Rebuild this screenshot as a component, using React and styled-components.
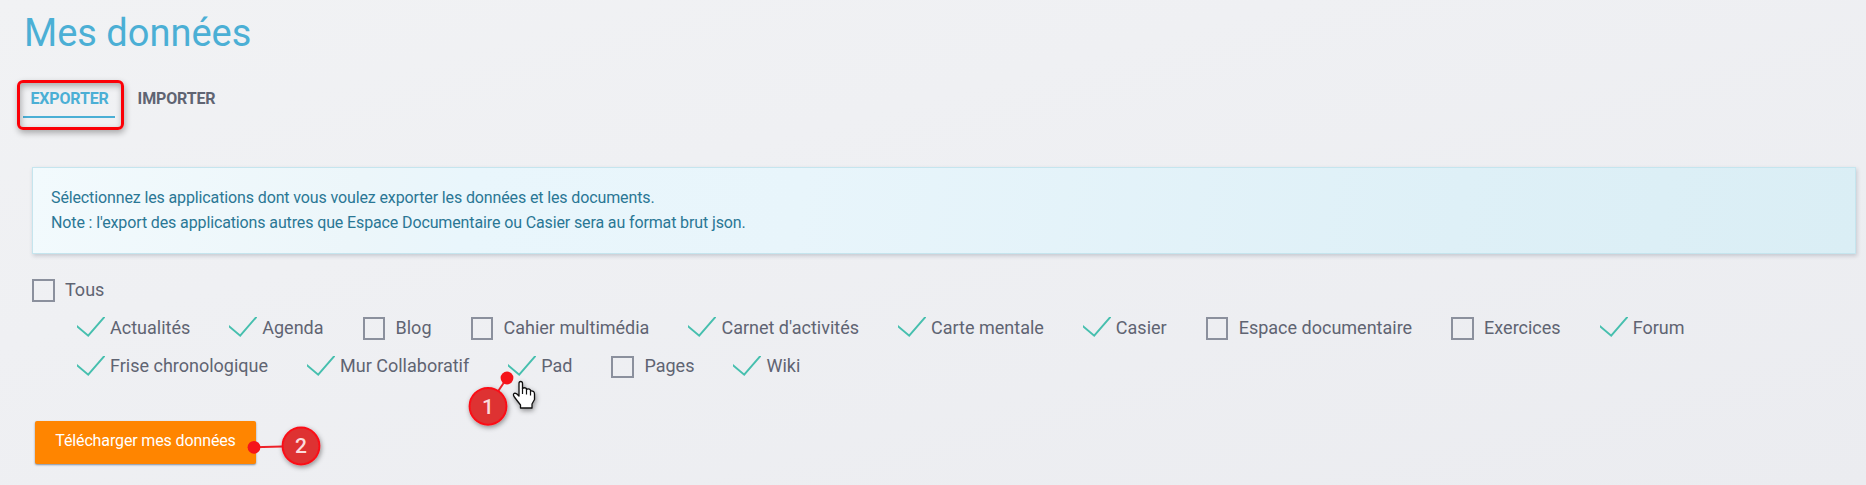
import React from "react";
import styled, { createGlobalStyle } from "styled-components";

const GlobalStyle = createGlobalStyle`
  * { box-sizing: border-box; }
  body {
    margin: 0;
    overflow: hidden;
    font-family: Roboto, "Liberation Sans", sans-serif;
    color: #5f6472;
  }
`;

const Page = styled.main`
  position: relative;
  display: flex;
  flex-direction: column;
  align-items: stretch;
  width: 100%;
  height: 485px;
  background: linear-gradient(165deg, #f1f2f4 0%, #eff0f3 35%, #ebecf0 100%);
`;

const Title = styled.h1`
  margin: 11px 0 0 24px;
  font-size: 38px;
  line-height: 45px;
  font-weight: 400;
  color: #4bafd5;
`;

const Tabs = styled.nav`
  display: flex;
  gap: 15px;
  margin: 27px 0 0 23px;
`;

const Tab = styled.button`
  width: 92px;
  height: 35px;
  padding: 2px 0 3px 1px;
  border: 0;
  border-bottom: 2px solid ${(p) => (p.$active ? "#4bafd5" : "transparent")};
  background: none;
  font: 700 16px/28px Roboto, sans-serif;
  letter-spacing: -0.15px;
  white-space: nowrap;
  text-transform: uppercase;
  color: ${(p) => (p.$active ? "#4bafd5" : "#5f6472")};
`;

const Notice = styled.section`
  height: 87px;
  margin: 49px 10px 0 32px;
  padding: 17px 18px;
  border: 1px solid #c5e5ee;
  background: linear-gradient(100deg, #f2fafd 0%, #ecf6fa 18%, #e9f6fc 24%, #e8f5fb 42%, #def0f7 78%, #daeef5 100%);
  box-shadow: 1px 2px 4px rgba(60, 70, 90, 0.22);
  font-size: 16px;
  line-height: 25px;
  letter-spacing: -0.125px;
  color: #2a7795;
`;

const Line = styled.p`
  margin: 0;
`;

const Choices = styled.div`
  display: flex;
  flex-direction: column;
  margin: 25px 0 0 32px;
`;

const Row = styled.div`
  display: flex;
  gap: 39px;
  height: ${(p) => p.$height}px;
  padding-left: ${(p) => (p.$nested ? "45px" : "0")};
  line-height: ${(p) => p.$leading}px;
`;

const Option = styled.label`
  display: flex;
  align-items: flex-start;
  font-size: 18px;
  white-space: nowrap;
`;

const Mark = styled.span`
  flex: none;
  display: block;
  width: 33px;
  height: 23px;
`;

const Box = styled.span`
  display: block;
  width: 22.5px;
  height: ${(p) => p.$height}px;
  border: 2px solid #8b909d;
`;

const Tick = styled.svg`
  display: block;
  width: 28px;
  height: 23px;
`;

const Download = styled.button`
  align-self: flex-start;
  width: 221px;
  height: 43px;
  margin: 27px 0 0 35px;
  padding: 0 0 4px;
  border: 0;
  border-radius: 2px;
  background: #ff8500;
  box-shadow: 0 1px 2px rgba(40, 60, 90, 0.55);
  font: 400 16px/39px Roboto, sans-serif;
  letter-spacing: -0.13px;
  color: #fff;
`;

const Highlight = styled.div`
  position: absolute;
  left: 17px;
  top: 80px;
  width: 107px;
  height: 50px;
  border: 3px solid #fb0007;
  border-radius: 6px;
  box-shadow: 1px 3px 6px rgba(0, 0, 0, 0.3), inset 1px 3px 6px rgba(0, 0, 0, 0.3);
`;

const Overlay = styled.svg`
  position: absolute;
  left: 0;
  top: 0;
  width: 600px;
  height: 485px;
  pointer-events: none;
`;

const rows = [
  {
    height: 39,
    leading: 21,
    boxHeight: 23,
    items: [
      ["Actualités", true],
      ["Agenda", true],
      ["Blog", false],
      ["Cahier multimédia", false],
      ["Carnet d'activités", true],
      ["Carte mentale", true],
      ["Casier", true],
      ["Espace documentaire", false],
      ["Exercices", false],
      ["Forum", true],
    ],
  },
  {
    height: 38,
    leading: 19,
    boxHeight: 22,
    items: [
      ["Frise chronologique", true],
      ["Mur Collaboratif", true],
      ["Pad", true],
      ["Pages", false],
      ["Wiki", true],
    ],
  },
];

function Choice({ label, checked, boxHeight = 23 }) {
  return (
    <Option>
      <Mark>
        {checked ? (
          <Tick viewBox="0 0 28 23">
            <path d="M-1 8.3 L11.2 18.7 L28.2 -1" fill="none" stroke="#46bfae" strokeWidth="1.9" />
          </Tick>
        ) : (
          <Box $height={boxHeight} />
        )}
      </Mark>
      {label}
    </Option>
  );
}

function Callout({ x, y, dotX, dotY, number }) {
  return (
    <g>
      <line x1={dotX} y1={dotY} x2={x} y2={y} stroke="#ee2229" strokeWidth="2" />
      <g filter="url(#soft)">
        <circle cx={x} cy={y} r="18.4" fill="#de3033" stroke="#fb1118" strokeWidth="2" />
      </g>
      <circle cx={dotX} cy={dotY} r="6.4" fill="#f5141a" />
      <text
        x={x}
        y={y + 7.3}
        textAnchor="middle"
        fontFamily="Roboto, sans-serif"
        fontSize="21"
        fontWeight="500"
        fill="#fbdcdd"
      >
        {number}
      </text>
    </g>
  );
}

export default function App() {
  return (
    <Page>
      <GlobalStyle />
      <Title>Mes données</Title>
      <Tabs>
        <Tab $active>Exporter</Tab>
        <Tab>Importer</Tab>
      </Tabs>
      <Notice>
        <Line>Sélectionnez les applications dont vous voulez exporter les données et les documents.</Line>
        <Line>Note : l'export des applications autres que Espace Documentaire ou Casier sera au format brut json.</Line>
      </Notice>
      <Choices>
        <Row $height={38} $leading={22}>
          <Choice label="Tous" checked={false} />
        </Row>
        {rows.map((row, i) => (
          <Row key={i} $nested $height={row.height} $leading={row.leading}>
            {row.items.map(([label, checked]) => (
              <Choice key={label} label={label} checked={checked} boxHeight={row.boxHeight} />
            ))}
          </Row>
        ))}
      </Choices>
      <Download>Télécharger mes données</Download>
      <Highlight />
      <Overlay viewBox="0 0 600 485">
        <defs>
          <filter id="soft" x="-50%" y="-50%" width="200%" height="200%">
            <feDropShadow dx="1" dy="2" stdDeviation="2.5" floodColor="#000" floodOpacity="0.4" />
          </filter>
        </defs>
        <Callout x={488} y={406.3} dotX={507} dotY={378} number="1" />
        <Callout x={301} y={446} dotX={254} dotY={447.3} number="2" />
        <path
          d="M519 396V383.5Q519 381.5 520.7 381.5Q522.5 381.5 522.5 383.5V388.5Q524 387 526.5 388.5V389.5Q528.5 388 530.5 390V391Q534.5 390.5 534.5 394V399.5L532 404V408H520.5V405L517 400.5L514 396.5Q512.5 393.5 515 393.2Q516.5 393.2 519 396Z"
          fill="#fff"
          stroke="#111"
          strokeWidth="1.3"
          strokeLinejoin="round"
          filter="url(#soft)"
        />
        <path d="M522.5 388V394M526.5 389V394.5M530.5 391V395.5" stroke="#111" strokeWidth="1.2" fill="none" />
      </Overlay>
    </Page>
  );
}
